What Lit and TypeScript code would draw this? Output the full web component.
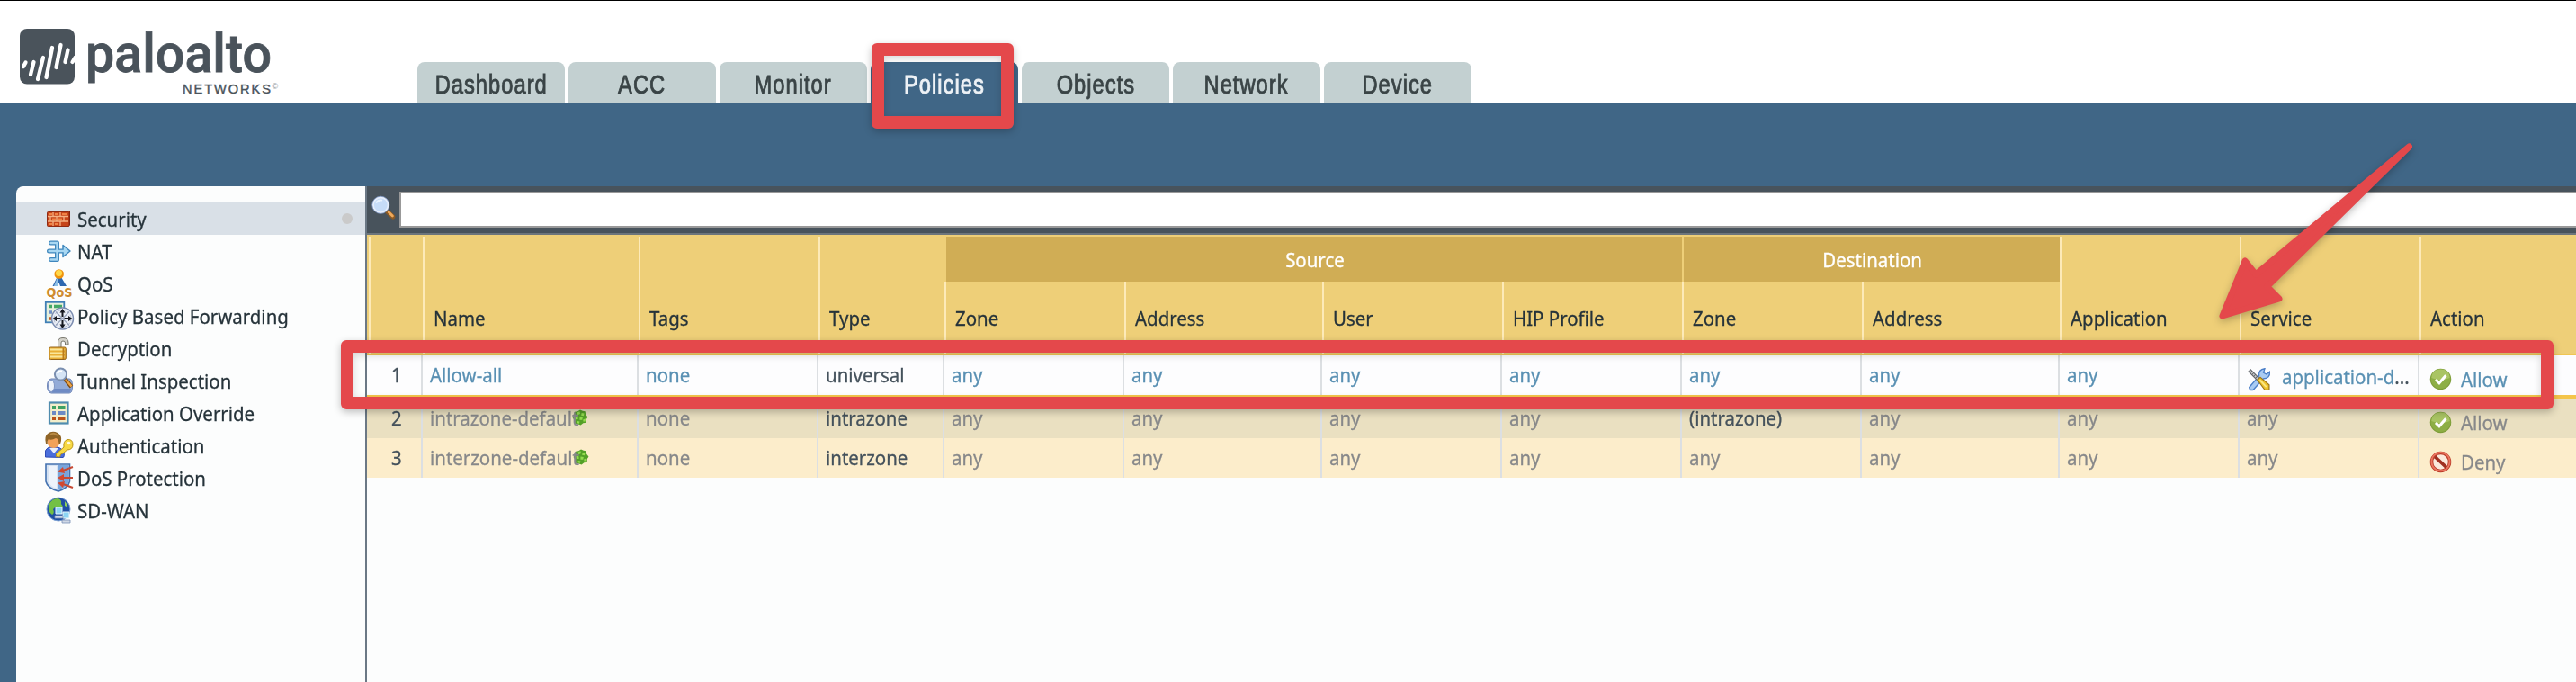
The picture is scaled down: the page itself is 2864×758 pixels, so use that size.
import { LitElement, html, css, svg, nothing } from "lit";
import { customElement, property } from "lit/decorators.js";
import { classMap } from "lit/directives/class-map.js";

const ICONS: Record<string, unknown> = {
  security: svg`
    <path d="M4 9L8 7H28L26 9Z" fill="#e89a78"/><path d="M26 9L28 7V23L26 25Z" fill="#7e1f0c"/>
    <rect x="2.5" y="8.5" width="24.5" height="16" rx="1" fill="#c6451a" stroke="#8f2b13"/>
    <path d="M3 13.5H26M3 19H26M9 9V13M17 9V13M13 14V19M21 14V19M6 14V19M9 19V24M17 19V24" stroke="#f4b183" stroke-width="1.3"/>
    <path d="M4 11H8M11 11H15M19 11H24M8 16.5H12M15 16.5H19M4 22H8M11 22H15" stroke="#f08345" stroke-width="2"/>`,
  nat: svg`
    <path d="M6.500 7H13.500V14M6.500 25.500H13.500V18M4.500 16H21" fill="none" stroke="#3f87bd" stroke-width="5" stroke-linejoin="round" stroke-linecap="round"/>
    <path d="M20 9.500L28 16L20 22.500Z" fill="#a8d8f2" stroke="#3f87bd" stroke-width="1.500" stroke-linejoin="round"/>
    <path d="M6.500 7H13.500V25.500H6.500M4.500 16H22" fill="none" stroke="#a9d8f3" stroke-width="2.400" stroke-linejoin="round" stroke-linecap="round"/>`,
  qos: svg`
    <path d="M13.500 9L8.500 19H14L15.500 15L17 19H24L18 9Z" fill="#2f68b0"/><path d="M13.500 10L10 19H14L15 13Z" fill="#8fc0e6"/>
    <circle cx="15.700" cy="5.500" r="5.300" fill="#f0930c"/><circle cx="15.500" cy="4.500" r="3.500" fill="#ffd84a"/>
    <text x="1.500" y="30.500" class="qos" textLength="29" lengthAdjust="spacingAndGlyphs">QoS</text>`,
  pbf: svg`
    <rect x="0.800" y="0.800" width="20.500" height="22.500" fill="#e8f0dc" stroke="#3f7fb6" stroke-width="1.800"/>
    <path d="M4 5.500H8M10 5.500H19" stroke="#45a865" stroke-width="3.500"/><path d="M4 12H8M10 12H16" stroke="#6f8fc8" stroke-width="3.500"/><path d="M4 19H8" stroke="#c0561f" stroke-width="3.500"/>
    <circle cx="19.500" cy="19" r="12" fill="#e9edf5" stroke="#7c8db0" stroke-width="1.500"/><circle cx="19.500" cy="19" r="9.500" fill="none" stroke="#b4bfd4" stroke-dasharray="3 2"/>
    <path d="M12 11.500L27 26.500M27 11.500L12 26.500" stroke="#98a3bb" stroke-width="1.200"/>
    <path d="M19.500 8L22.500 12.500H20.500V17H18.500V12.500H16.500ZM19.500 30L22.500 25.500H20.500V21H18.500V25.500H16.500ZM8.500 19L13 16V18H17.500V20H13V22ZM30.500 19L26 16V18H21.500V20H26V22Z" fill="#15181f"/>`,
  decryption: svg`
    <path d="M14.500 17V9Q14.500 4.500 20 4.500Q26 4.500 26 10V12H22.500V10Q22.500 8 20 8Q18 8 18 10V17" fill="#d4d3cb" stroke="#77766d"/>
    <rect x="4.800" y="15" width="18.500" height="13.500" rx="1.500" fill="#e8ae35" stroke="#94631a"/>
    <path d="M6 17.500H22M6 21.500H22M6 25.500H22" stroke="#fae69a" stroke-width="1.800"/><path d="M20.500 16V28" stroke="#bd7c19" stroke-width="2"/>`,
  tunnel: svg`
    <path d="M7 14H27Q30.500 14 30.500 22Q30.500 30 27 30H7Q2.500 29 2.500 22Q2.500 15 7 14Z" fill="#93abd8" stroke="#6f86b7"/>
    <path d="M8 25H29Q28.500 29 27 29.500H8Z" fill="#6f8bc4"/><ellipse cx="7" cy="22" rx="3.500" ry="6.500" fill="#eef3fb" stroke="#7e95c4"/>
    <path d="M22 14L29.500 23" stroke="#7d4b12" stroke-width="4.500"/><path d="M23 15L29.500 22.500" stroke="#eda344" stroke-width="2.500"/>
    <circle cx="17.500" cy="9" r="6.600" fill="#d5e4f5" stroke="#7a8fb0" stroke-width="2"/><path d="M14 8Q15 5 19 5.500" stroke="#fff" stroke-width="2" fill="none"/>`,
  override: svg`
    <rect x="5" y="4.500" width="20.500" height="23" fill="#f3eecb" stroke="#4f8cae" stroke-width="2.200"/>
    <path d="M8 10H12M14 10H22.500" stroke="#3fa263" stroke-width="4"/><path d="M8 16H12M14 16H22.500" stroke="#6d8bc4" stroke-width="4"/><path d="M8 22H12M14 22H22.500" stroke="#bb5418" stroke-width="4"/>`,
  auth: svg`
    <path d="M0.500 29V22Q3 17 9 17.500Q17 17 21 23Q22 29 20 29.500Z" fill="#4a6edb" stroke="#2d4ab5"/><path d="M5 19L10 25L15 19Z" fill="#e9effc"/>
    <circle cx="9.500" cy="12" r="7" fill="#f2a25a"/>
    <path d="M1 14Q-1 6 3 3Q8 -1 14 2Q19 5 18 11Q17 16 15.500 14Q15 8 12 8Q7 11 4 9Q2 11 3 15Z" fill="#8f6426"/><path d="M6 4Q10 1 14 5" stroke="#b98b45" stroke-width="2" fill="none"/>
    <path d="M21 18L12.500 25.500V28.500L16.500 29L17.500 26L20 25L24.500 21Q31 21 31 15Q31 9 25 9.500Q20 11 21 18Z" fill="#f7d944" stroke="#bb9517"/><circle cx="26.500" cy="13.500" r="1.800" fill="#fffbe0"/>`,
  dos: svg`
    <path d="M1 1H27.500V20Q26 27 15 31Q3 28 1 20Z" fill="#d5e2f2" stroke="#4472b0" stroke-width="1.600"/><path d="M14 2H26.700V20Q25 26 14 30Z" fill="#78a5dc"/><path d="M4 3H13V28Q5 25 4 20Z" fill="#eef3fb"/>
    <path d="M31 4L20 8M31 16H20M31 27L20 23" stroke="#c64a34" stroke-width="2.200"/><path d="M14 9.500L20 4L22 11ZM14 16L21 12V20ZM14 21.500L22 20L20 27Z" fill="#d2482f"/>`,
  sdwan: svg`
    <circle cx="15" cy="15" r="13" fill="#1f4fa3" stroke="#7fa3d5"/><path d="M4 10Q8 3 14 3Q19 4 18 9L20 12L15 15L12 12L9 15Q11 19 8 21Q3 18 4 10Z" fill="#73c043"/><path d="M22 6Q25 9 25.500 13L22 11Z" fill="#8fd058"/>
    <path d="M12 13H19V20H12ZM20 18H27V25H20Z" fill="#8dd4f4" stroke="#e8f6fc"/><path d="M11 22H20V25H11ZM19 27H28V30H19Z" fill="#cfd8e6" stroke="#7a90b5" stroke-width="0.800"/>`,
  search: svg`
    <path d="M19.500 19L26.500 25.500" stroke="#8b5a25" stroke-width="5.500" stroke-linecap="round"/><path d="M21.500 20L26 24.500" stroke="#efaa5c" stroke-width="3" stroke-linecap="round"/>
    <circle cx="12" cy="11.500" r="9" fill="#c6dcf8" stroke="#e6eefb" stroke-width="2.200"/><circle cx="12" cy="11.500" r="10.200" fill="none" stroke="#7d98c9" stroke-width="0.800"/><path d="M6.500 9Q9 5 14 6" stroke="#e9f3ff" stroke-width="2" fill="none"/>`,
  service: svg`
    <path d="M3 26L15 12Q14 4 22 3L20.500 8L24 10L28 7Q29 15 20 15.500L8 29Q3 30 3 26Z" fill="#a9cbf3" stroke="#4b7fc8" stroke-width="1.500"/>
    <path d="M3 5L14 16" stroke="#606468" stroke-width="4.500"/><path d="M3.500 5.500L14 16" stroke="#c7c9cc" stroke-width="2.200" stroke-dasharray="2 1"/>
    <path d="M13 17L16.500 13.500L27.500 23V29H22Z" fill="#f0c32c" stroke="#9c761a" stroke-width="1.300"/><path d="M16 17L24 25.500" stroke="#fae886" stroke-width="2"/>`,
  allow: svg`
    <circle cx="16" cy="16" r="15" fill="#7d9c39"/><circle cx="16" cy="15.500" r="14" fill="#8dae45"/><path d="M3 14Q4 2 16 2Q28 2 29 14Q16 20 3 14Z" fill="#a9c463"/>
    <path d="M9 16.500L14 21.500L23.500 10.500" fill="none" stroke="#fff" stroke-width="4"/>`,
  deny: svg`
    <circle cx="16" cy="16" r="12.800" fill="#fbe9dc" stroke="#b93a27" stroke-width="4.500"/><circle cx="16" cy="15.500" r="13" fill="none" stroke="#ea7560" stroke-width="2.400"/>
    <path d="M8 8.500L24 23.500" stroke="#a02f20" stroke-width="4.500"/>`,
  gear: svg`
    <path d="M16 1L21 3L26 4L27 10L31 15L28 20L28 26L22 27L17 31L11 29L5 28L5 22L1 16L4 11L5 5L11 4Z" fill="#53a028"/>
    <path d="M10 6L15 4L16 9L11 11ZM19 7L24 8L23 13L18 12ZM6 14L11 14L12 19L7 20ZM15 15L21 16L20 21L15 21ZM10 23L15 24L14 28L10 27ZM22 20L27 18L26 24L22 24Z" fill="#93dc4f"/>`,
};

/** Square glyph drawn on a 32-unit grid. */
@customElement("ui-icon")
export class UiIcon extends LitElement {
  static styles = css`
    :host { display: block; flex: none; }
    svg { display: block; width: 100%; height: 100%; overflow: visible; }
    .qos { font: 700 14.5px "DejaVu Sans", sans-serif; fill: #cf8c30; }
  `;
  @property() name = "";
  render() {
    return html`<svg viewBox="0 0 32 32">${ICONS[this.name]}</svg>`;
  }
}

const TABS = ["Dashboard", "ACC", "Monitor", "Policies", "Objects", "Network", "Device"];
const MENU: [string, string][] = [
  ["security", "Security"], ["nat", "NAT"], ["qos", "QoS"], ["pbf", "Policy Based Forwarding"],
  ["decryption", "Decryption"], ["tunnel", "Tunnel Inspection"], ["override", "Application Override"],
  ["auth", "Authentication"], ["dos", "DoS Protection"], ["sdwan", "SD-WAN"],
];
const RULES = [
  { name: "Allow-all", type: "universal", dst: "any", service: "application-d", action: "Allow", predefined: false },
  { name: "intrazone-default", type: "intrazone", dst: "(intrazone)", service: "", action: "Allow", predefined: true },
  { name: "interzone-default", type: "interzone", dst: "any", service: "", action: "Deny", predefined: true },
];

@customElement("app-root")
export class AppRoot extends LitElement {
  static styles = css`
    :host {
      display: flex; flex-direction: column; position: relative; box-sizing: border-box;
      height: 758px; overflow: hidden; background: #fff; border-top: 1px solid #000;
      font: 22.4px "Noto Sans", Tahoma, sans-serif; color: #26333a;
    }
    * { box-sizing: border-box; }
    .t { display: inline-block; transform: scaleX(0.913); transform-origin: 0 50%; white-space: nowrap; -webkit-text-stroke: 0.3px; }
    .top { height: 114px; flex: none; display: flex; align-items: flex-end; }
    .logo { width: 464px; height: 114px; flex: none; display: block; }
    .brand { font: 500 60px Roboto, sans-serif; fill: #4a535b; stroke: #4a535b; stroke-width: 0.8px; }
    .sub { font: 14.6px "Liberation Sans", Arial, sans-serif; fill: #4a535b; stroke: #4a535b; stroke-width: 0.4px; }
    .reg { font: 9px "Liberation Sans", Arial, sans-serif; fill: #8a9196; }
    .tabs { display: flex; gap: 4px; }
    .tab {
      width: 164px; height: 46px; border-radius: 8px 8px 0 0; background: #c3d0d1; color: #3a4446;
      display: flex; justify-content: center; font: 30px/50px "Liberation Sans", Arial, sans-serif;
      -webkit-text-stroke: 0.9px;
    }
    .tab span { transform: scaleX(0.79); letter-spacing: 1.3px; margin: 0 -20px; }
    .tab.on { background: #406686; color: #eef2f6; }
    .frame { flex: 1; min-height: 0; background: #406686; padding: 92px 0 0 18px; display: flex; }
    .side { width: 390px; flex: none; background: #fcfdfd; border-right: 2px solid #6b7885; border-top-left-radius: 8px; padding-top: 18px; }
    .item { height: 36px; display: flex; align-items: center; }
    .item .t { line-height: 34px; padding-top: 2px; }
    .item:first-child { background: #d9e0e7; }
    .item ui-icon { width: 32px; height: 32px; margin: 0 4px 0 32px; }
    .dot { width: 12px; height: 12px; border-radius: 50%; background: #cacaca; margin: 0 14px 0 auto; }
    .main { flex: 1; min-width: 0; background: #fcfdfd; overflow: hidden; }
    .bar { height: 54px; background: #48535c; border-bottom: 2px solid #6c757c; display: flex; padding: 6px 0 0 4px; }
    .bar ui-icon { width: 30px; height: 30px; margin: 4px 2px 0 0; }
    .input { flex: 1; height: 40px; margin-right: -4px; background: #fff; border: 2px solid #999; }
    .head, .row { display: grid; }
    .head {
      grid-template-columns: 60px 240px 200px 140px 200px 220px 200px 200px 200px 220px 200px 200px 1fr;
      grid-template-rows: 50px 80px; height: 134px; padding: 2px 0 0 2px; background: #eecf78; border-bottom: 2px solid #f0c652;
    }
    .h { grid-row: 2; border-left: 2px solid #fdeab8; padding: 18px 0 0 10px; line-height: 45px; }
    .h.tall { grid-row: 1 / 3; padding-top: 68px; }
    .g { grid-row: 1; background: #d0ad55; border-left: 2px solid #eecf78; color: #fff; text-align: center; line-height: 51px; padding-left: 2px; }
    .g .t { transform-origin: 50% 50%; }
    .row {
      grid-template-columns: 62px 240px 200px 140px 200px 220px 200px 200px 200px 220px 200px 200px 1fr;
      grid-template-rows: 44px; height: 44px; line-height: 43px; background: #fcedcb; color: #87888a;
    }
    .row.first { height: 48px; background: #fdfdfe; color: #5990b3; border-bottom: 4px solid #f4c54a; }
    .row.second { background: #eae0c1; }
    .c { border-right: 2px solid #dcdfe2; padding-left: 8px; display: flex; min-width: 0; white-space: nowrap; }
    .num { padding-left: 27px; }
    .num, .dark { color: #45525c; }
    .gear { width: 18px; height: 18px; margin: 12px 0 0 -23px; }
    .svc { line-height: 47px; }
    .svc ui-icon { width: 29px; height: 29px; margin: 12px 10px 0 0; }
    .svc b { font-weight: 400; color: #45525c; }
    .act { border: 0; padding-left: 12px; line-height: 53px; }
    .act ui-icon { width: 25px; height: 25px; margin: 14px 10px 0 -1px; }
    .mark { position: absolute; border: 14px solid #e4484b; border-radius: 6px; box-shadow: 0 3px 8px rgba(0, 0, 0, 0.25), inset 0 3px 8px rgba(0, 0, 0, 0.16); }
    .mark.tabmark { left: 968.5px; top: 47px; width: 158px; height: 95px; }
    .mark.rowmark { left: 379px; top: 377px; width: 2460px; height: 77px; }
    .arrow { position: absolute; left: 2450px; top: 139px; width: 250px; height: 230px; filter: drop-shadow(0 3px 4px rgba(0, 0, 0, 0.25)); }
  `;

  private logo() {
    return svg`<svg class="logo" viewBox="0 1 464 114">
      <rect x="22" y="32" width="61" height="61.500" rx="8" fill="#4a535b"/>
      <path d="M26 74L28.500 69.500M34 83L37.500 69M42 88L48 64M51.500 86L58 53M62.500 75L67.500 50M72.500 69L75.500 55.500M80.500 69L83.500 64" stroke="#fff" stroke-width="4.300" stroke-linecap="round"/>
      <text class="brand" x="95" y="80" textLength="207" lengthAdjust="spacingAndGlyphs">paloalto</text>
      <text class="sub" x="203" y="104.300" textLength="98" lengthAdjust="spacing">NETWORKS</text>
      <text class="reg" x="302.500" y="99">©</text>
    </svg>`;
  }

  private row(r: (typeof RULES)[number], i: number) {
    const c = (v: string, k = "") => html`<div class="c ${k}"><span class="t">${v}</span></div>`;
    return html`<div class=${classMap({ row: true, first: i === 0, second: i === 1 })}>
      ${c(String(i + 1), "num")}
      <div class="c"><span class="t">${r.name}</span>${r.predefined ? html`<ui-icon class="gear" name="gear"></ui-icon>` : nothing}</div>
      ${c("none")}${c(r.type, "dark")}${c("any")}${c("any")}${c("any")}${c("any")}
      ${c(r.dst, r.dst === "any" ? "" : "dark")}${c("any")}${c("any")}
      ${r.service
        ? html`<div class="c svc"><ui-icon name="service"></ui-icon><span class="t">${r.service}<b>...</b></span></div>`
        : c("any")}
      <div class="c act"><ui-icon name=${r.action.toLowerCase()}></ui-icon><span class="t">${r.action}</span></div>
    </div>`;
  }

  render() {
    const h = (v: string, col: number, tall = true) =>
      html`<div class=${classMap({ h: true, tall })} style="grid-column:${col}"><span class="t">${v}</span></div>`;
    return html`
      <div class="top">
        ${this.logo()}
        <nav class="tabs">${TABS.map((t) => html`<div class=${classMap({ tab: true, on: t === "Policies" })}><span>${t}</span></div>`)}</nav>
      </div>
      <div class="frame">
        <aside class="side">
          ${MENU.map(([icon, label], i) => html`<div class="item"><ui-icon name=${icon}></ui-icon><span class="t">${label}</span>${i === 0 ? html`<i class="dot"></i>` : nothing}</div>`)}
        </aside>
        <main class="main">
          <div class="bar"><ui-icon name="search"></ui-icon><div class="input"></div></div>
          <div class="head">
            ${h("", 1)}${h("Name", 2)}${h("Tags", 3)}${h("Type", 4)}
            <div class="g" style="grid-column:5 / 9"><span class="t">Source</span></div>
            ${h("Zone", 5, false)}${h("Address", 6, false)}${h("User", 7, false)}${h("HIP Profile", 8, false)}
            <div class="g" style="grid-column:9 / 11"><span class="t">Destination</span></div>
            ${h("Zone", 9, false)}${h("Address", 10, false)}${h("Application", 11)}${h("Service", 12)}${h("Action", 13)}
          </div>
          ${RULES.map((r, i) => this.row(r, i))}
        </main>
      </div>
      <div class="mark tabmark"></div>
      <div class="mark rowmark"></div>
      <svg class="arrow" viewBox="2450 140 250 230">
        <path d="M2678.500 163L2508 305L2496 290L2471 351L2534 332L2520.500 318.500Z" fill="#e4484b" stroke="#e4484b" stroke-width="7" stroke-linejoin="round"/>
      </svg>
    `;
  }
}
